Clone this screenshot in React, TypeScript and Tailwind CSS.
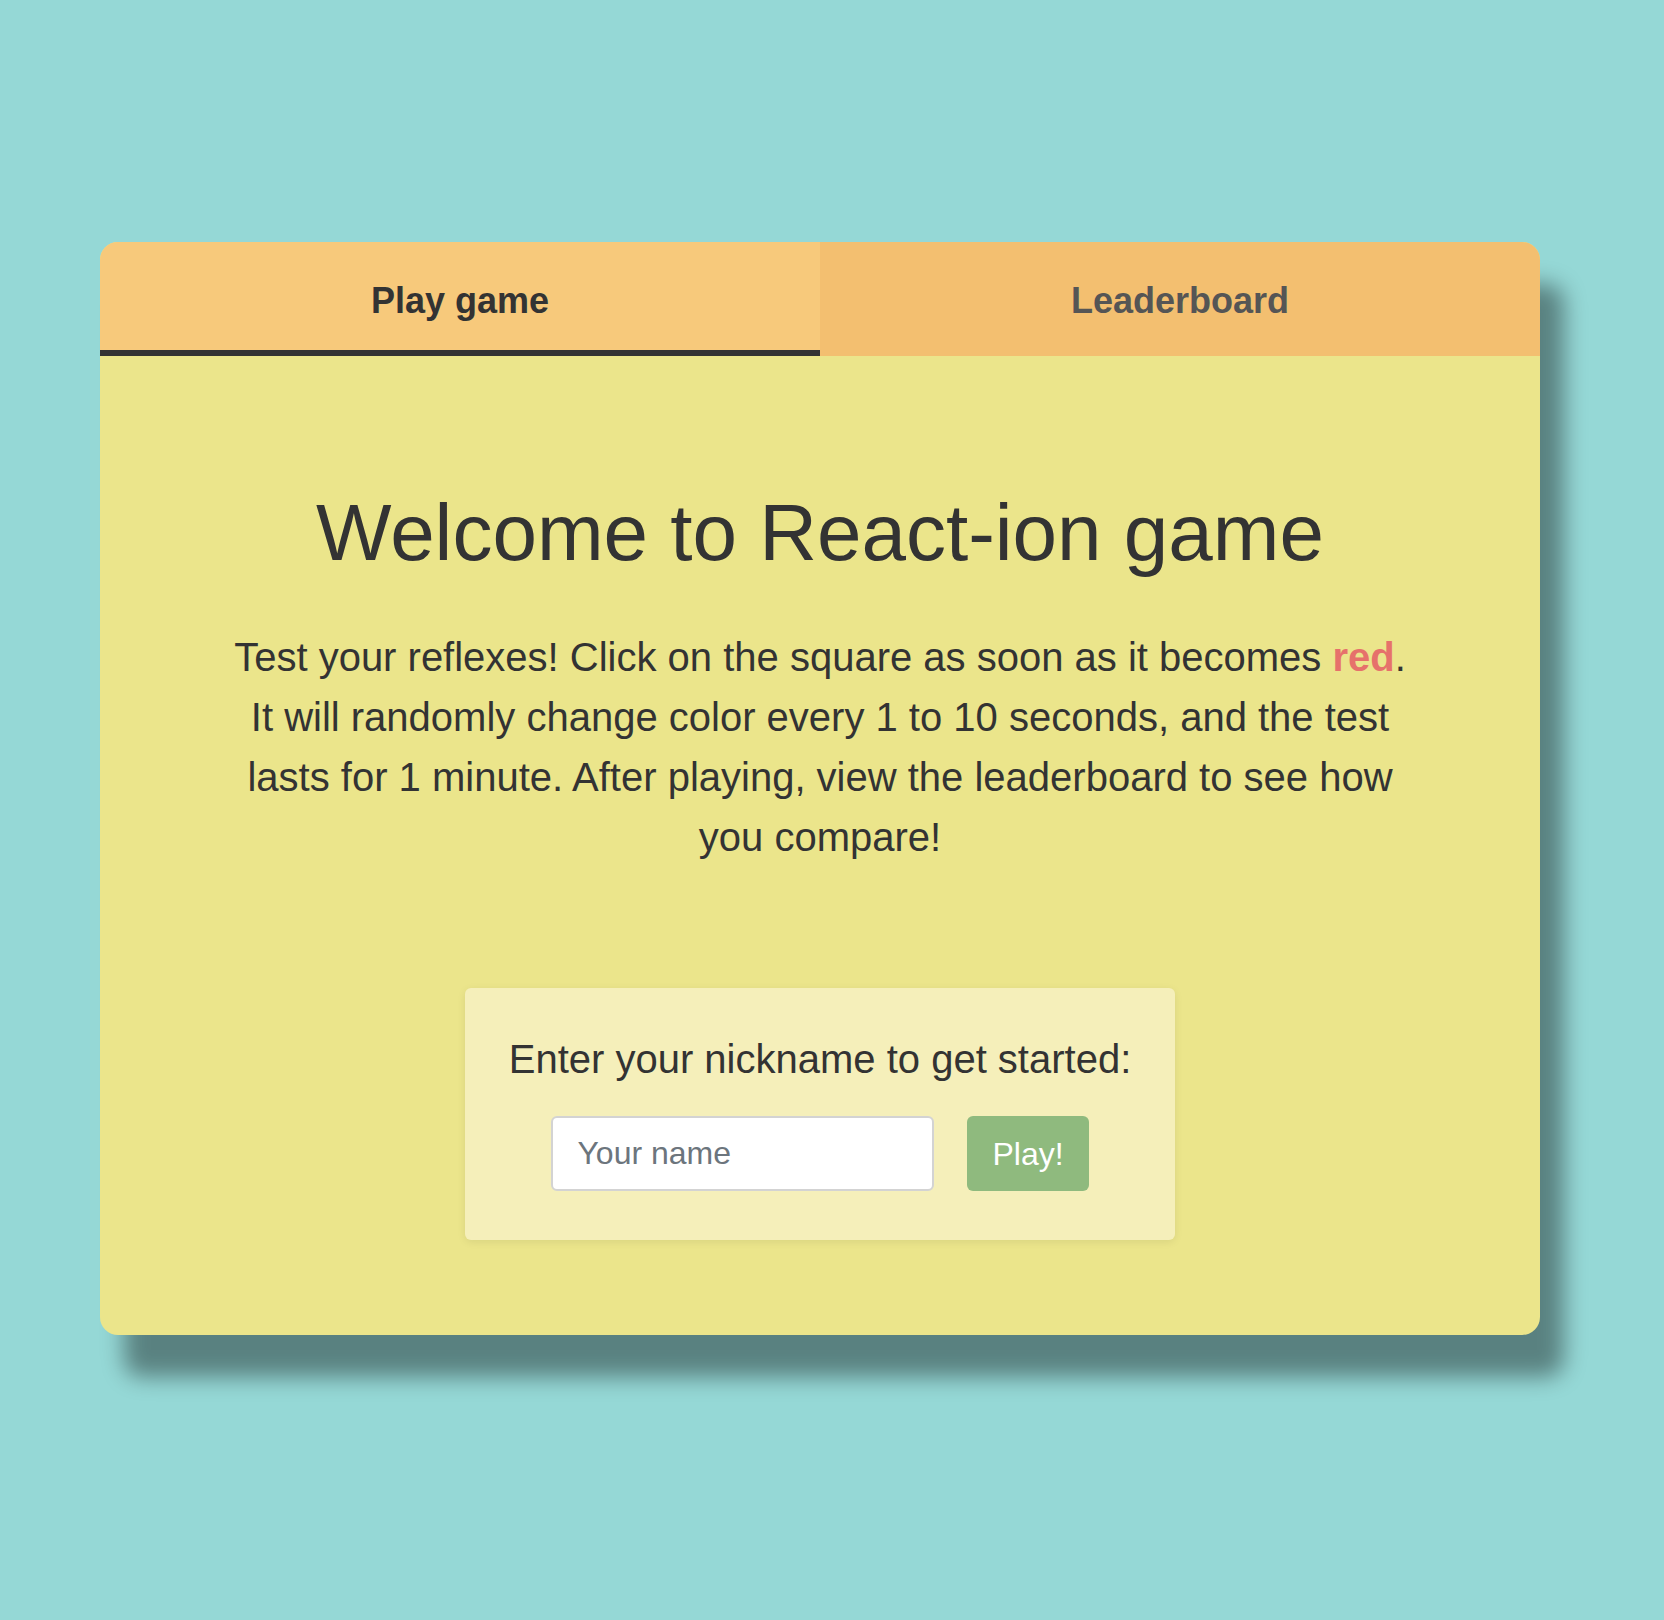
export default function App() {
  return (
    <div className="min-h-[1620px] bg-[#95d8d6] pt-[242px] pl-[100px] font-['Liberation_Sans',Arial,sans-serif] text-[#333]">
      <div className="w-[1440px] rounded-[18px] bg-[#ebe58b] shadow-[24px_42px_22px_rgba(0,0,0,0.4)] overflow-hidden">
        {/* tabs */}
        <div className="flex h-[114px]">
          <button className="flex-1 flex items-center justify-center pt-[4px] bg-[#f7c97b] shadow-[inset_0_-6px_0_#333] text-[36px] font-bold text-[#333]">
            Play game
          </button>
          <button className="flex-1 flex items-center justify-center pt-[4px] bg-[#f3bf70] text-[36px] font-bold text-[#555]">
            Leaderboard
          </button>
        </div>

        <div className="pt-[129px] pb-[95px] text-center">
          <h1 className="text-[80px] leading-[96px] font-normal">Welcome to React-ion game</h1>
          <p className="w-[1190px] mx-auto mt-[46px] text-[40px] leading-[60px]">
            Test your reflexes! Click on the square as soon as it becomes{' '}
            <span className="font-bold text-[#e6716b]">red</span>. It will randomly change color every 1 to 10
            seconds, and the test lasts for 1 minute. After playing, view the leaderboard to see how you compare!
          </p>

          <div className="w-[710px] mx-auto mt-[121px] pt-[41px] pb-[49px] bg-[#f5efba] rounded-[6px] shadow-[0_2px_8px_rgba(0,0,0,0.08)]">
            <div className="text-[40px] leading-[60px]">Enter your nickname to get started:</div>
            <div className="flex justify-center items-center mt-[27px]">
              <input
                type="text"
                placeholder="Your name"
                className="w-[383px] h-[75px] bg-white border-2 border-[#d3d3d3] rounded-[6px] px-[24px] text-[32px] text-[#333] placeholder:text-[#6c757d] outline-none"
              />
              <button className="ml-[33px] h-[75px] px-[25px] bg-[#8fba7e] text-white text-[32px] rounded-[6px]">
                Play!
              </button>
            </div>
          </div>
        </div>
      </div>
    </div>
  );
}
